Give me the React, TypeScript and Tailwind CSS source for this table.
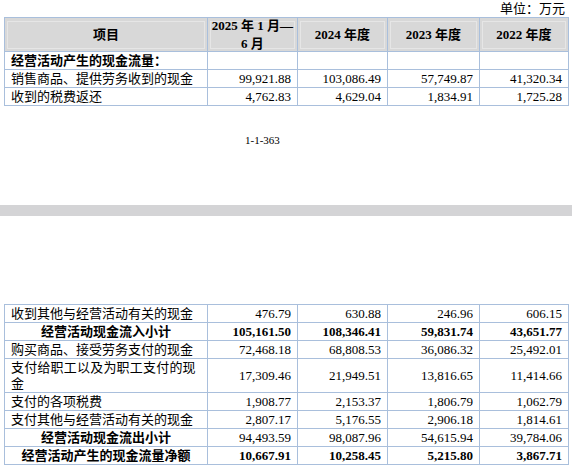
const font = { fontFamily: '"Liberation Serif", "Noto Sans CJK SC", serif' };

type Row = {
    label: string;
    values: string[];
    kind?: "section" | "subtotal" | "total" | "tall";
};

const topRows: Row[] = [
    { label: "经营活动产生的现金流量：", values: ["", "", "", ""], kind: "section" },
    { label: "销售商品、提供劳务收到的现金", values: ["99,921.88", "103,086.49", "57,749.87", "41,320.34"] },
    { label: "收到的税费返还", values: ["4,762.83", "4,629.04", "1,834.91", "1,725.28"] },
];

const bottomRows: Row[] = [
    { label: "收到其他与经营活动有关的现金", values: ["476.79", "630.88", "246.96", "606.15"] },
    { label: "经营活动现金流入小计", values: ["105,161.50", "108,346.41", "59,831.74", "43,651.77"], kind: "total" },
    { label: "购买商品、接受劳务支付的现金", values: ["72,468.18", "68,808.53", "36,086.32", "25,492.01"] },
    { label: "支付给职工以及为职工支付的现金", values: ["17,309.46", "21,949.51", "13,816.65", "11,414.66"], kind: "tall" },
    { label: "支付的各项税费", values: ["1,908.77", "2,153.37", "1,806.79", "1,062.79"] },
    { label: "支付其他与经营活动有关的现金", values: ["2,807.17", "5,176.55", "2,906.18", "1,814.61"] },
    { label: "经营活动现金流出小计", values: ["94,493.59", "98,087.96", "54,615.94", "39,784.06"], kind: "subtotal" },
    { label: "经营活动产生的现金流量净额", values: ["10,667.91", "10,258.45", "5,215.80", "3,867.71"], kind: "total" },
];

const widths = ["w-[203px]", "w-[90px]", "w-[90px]", "w-[92px]", "w-[89px]"];
const cell = "border border-[#a9bfdc] px-[6px] p-0 align-middle";

function HeadCell({ children, w }: { children: React.ReactNode; w: string }) {
    return (
        <th className={`${w} border border-[#a9bfdc] bg-[#d8d8d8] p-[2px] align-middle`}>
            <div className="flex h-[28px] flex-col items-center justify-center border border-[#e6e6e6] text-[13px] font-bold leading-[18px]">
                {children}
            </div>
        </th>
    );
}

function BodyRow({ row }: { row: Row }) {
    const tall = row.kind === "tall";
    const h = tall ? "h-[34px]" : "h-[18px]";
    const centered = row.kind === "total" || row.kind === "subtotal";
    const boldLabel = row.kind === "section" || centered;
    const boldNums = row.kind === "total";
    return (
        <tr className={h}>
            <td className={`${cell} ${boldLabel ? "font-bold" : ""} ${centered ? "text-center" : "text-left"} leading-[16px]`}>
                {tall ? (
                    <span className="block w-[186px] tracking-[0.2px]">{row.label}</span>
                ) : (
                    <span className="whitespace-nowrap">{row.label}</span>
                )}
            </td>
            {row.values.map((v, i) => (
                <td key={i} className={`${cell} text-right leading-[16px] ${boldNums ? "font-bold" : ""}`}>
                    {v}
                </td>
            ))}
        </tr>
    );
}

function Table({ rows, header }: { rows: Row[]; header?: boolean }) {
    return (
        <table className="ml-[4px] w-[565px] table-fixed border-collapse text-[13px] text-black" style={font}>
            {header && (
                <thead>
                    <tr className="h-[34px]">
                        <HeadCell w={widths[0]}>项目</HeadCell>
                        <HeadCell w={widths[1]}>
                            <span>2025 年 1 月—</span>
                            <span>6 月</span>
                        </HeadCell>
                        <HeadCell w={widths[2]}>2024 年度</HeadCell>
                        <HeadCell w={widths[3]}>2023 年度</HeadCell>
                        <HeadCell w={widths[4]}>2022 年度</HeadCell>
                    </tr>
                </thead>
            )}
            {!header && (
                <colgroup>
                    {widths.map((w, i) => (
                        <col key={i} className={w} />
                    ))}
                </colgroup>
            )}
            <tbody>
                {rows.map((r, i) => (
                    <BodyRow key={i} row={r} />
                ))}
            </tbody>
        </table>
    );
}

export default function App() {
    return (
        <div className="h-[465px] w-[572px] overflow-hidden bg-white" style={font}>
            <div className="flex h-[17px] items-center justify-end pr-[7px] text-[13px] leading-[15px]">
                单位：万元
            </div>
            <Table rows={topRows} header />
            <div className="pt-[27px] pl-[245px] text-[11px] leading-[14px]">1-1-363</div>
            <div className="mt-[58px] h-[11px] bg-[#d4d4d6]" />
            <div className="h-[88px]" />
            <Table rows={bottomRows} />
        </div>
    );
}
